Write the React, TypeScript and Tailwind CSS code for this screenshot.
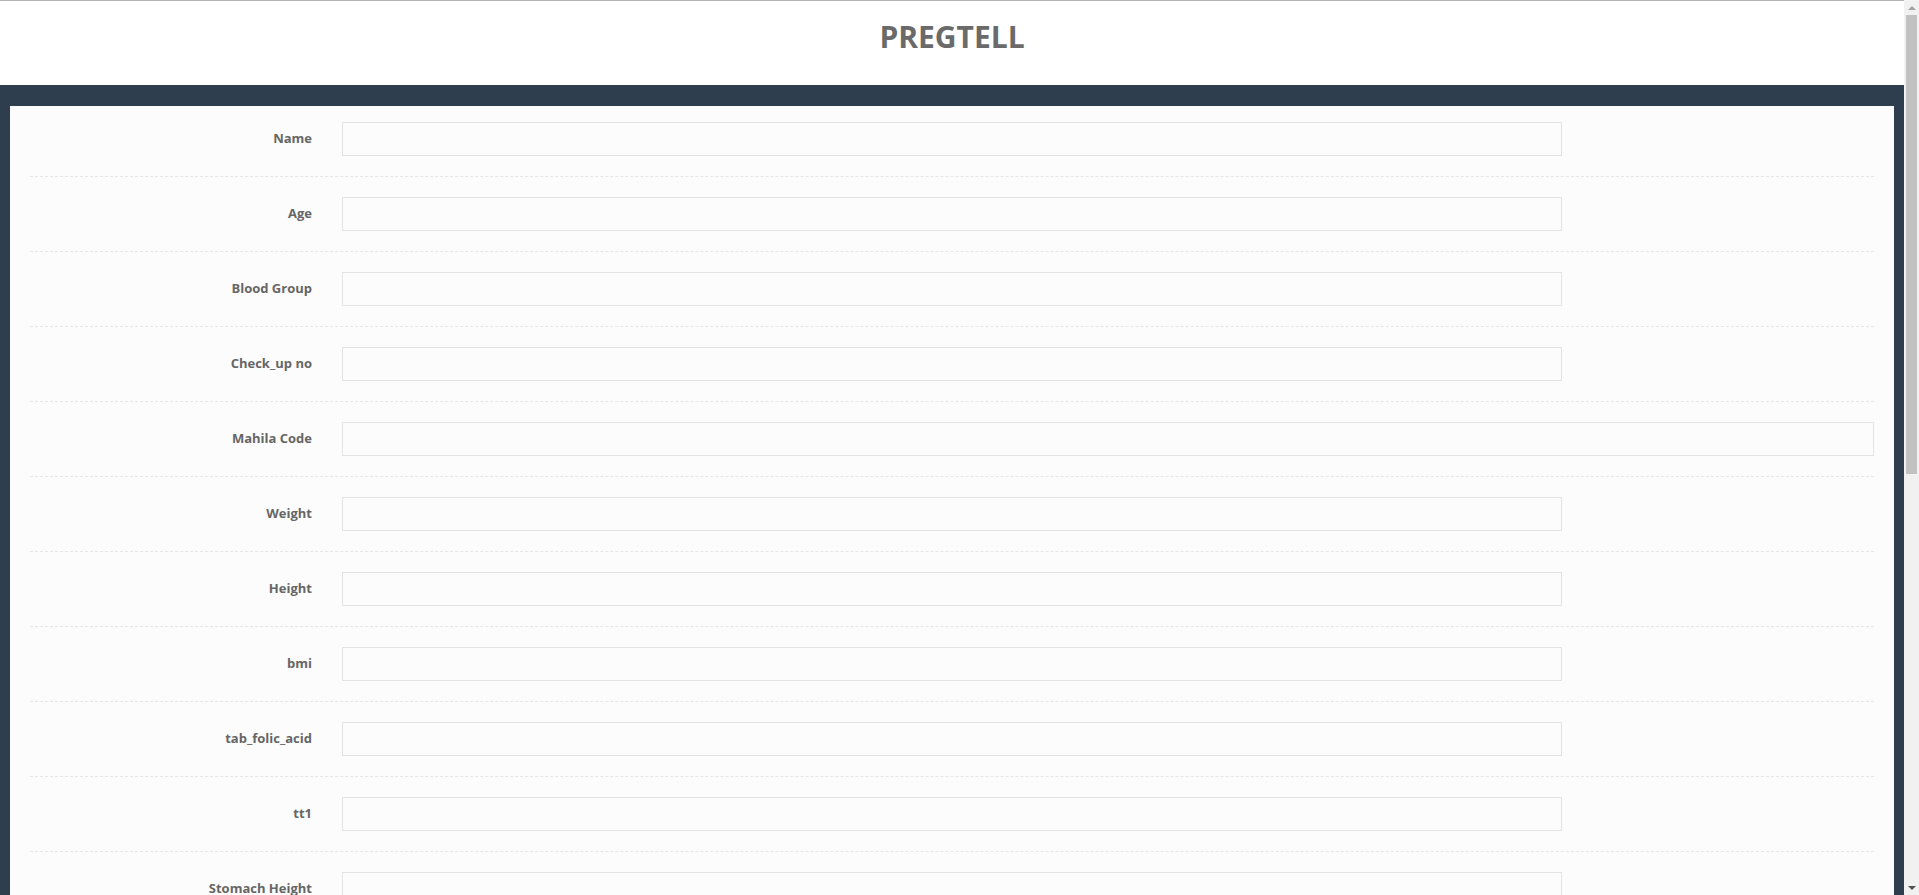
import React from 'react';

const fields = [
  { label: 'Name' },
  { label: 'Age' },
  { label: 'Blood Group' },
  { label: 'Check_up no' },
  { label: 'Mahila Code', wide: true },
  { label: 'Weight' },
  { label: 'Height' },
  { label: 'bmi' },
  { label: 'tab_folic_acid' },
  { label: 'tt1' },
  { label: 'Stomach Height' },
  { label: 'tt2' },
  { label: 'Hb' },
  { label: 'Blood Pressure' },
];

// fake browser scrollbar, sits over the right edge of the window
const Scrollbar = () => (
  <div className="fixed top-0 right-0 flex h-screen w-[15px] flex-col items-center bg-[#f1f1f1]">
    <div className="flex h-[15px] w-full items-center justify-center">
      <div className="h-0 w-0 border-x-[4px] border-b-[4px] border-x-transparent border-b-[#a3a3a3]" />
    </div>
    <div className="h-[459px] w-[11px] bg-[#c1c1c1]" />
    <div className="flex-1" />
    <div className="flex h-[15px] w-full items-center justify-center">
      <div className="h-0 w-0 border-x-[4px] border-t-[4px] border-x-transparent border-t-[#505050]" />
    </div>
  </div>
);

const App = () => {
  return (
    <div className="min-h-screen bg-[#2f3e4e] font-['Open_Sans',sans-serif]">
      <div className="mr-[15px]">
        {/* Header */}
        <div className="h-[85px] border-t border-[#b4b4b4] bg-white pt-[18px] text-center">
          <h1 className="text-[30px] leading-[36px] font-bold text-[#6a6a6a]">PREGTELL</h1>
        </div>

        {/* Form card */}
        <div className="px-[10px] pt-[21px]">
          <div className="bg-[#fcfcfc] px-5 pt-4">
            {fields.map((f, i) => (
              <div
                key={f.label}
                className={`flex items-center border-b border-dashed border-[#e6e6e6] pb-5 ${i === 0 ? '' : 'pt-5'}`}
              >
                <label className="w-[282px] shrink-0 text-right text-[13px] font-bold text-[#666666]">
                  {f.label}
                </label>
                <input
                  type="text"
                  className={`ml-[30px] h-[34px] border border-[#e3e3e3] bg-[#fcfcfc] outline-none ${f.wide ? 'flex-1' : 'w-[1220px]'}`}
                />
              </div>
            ))}
          </div>
        </div>
      </div>
      <Scrollbar />
    </div>
  );
};

export default App;
